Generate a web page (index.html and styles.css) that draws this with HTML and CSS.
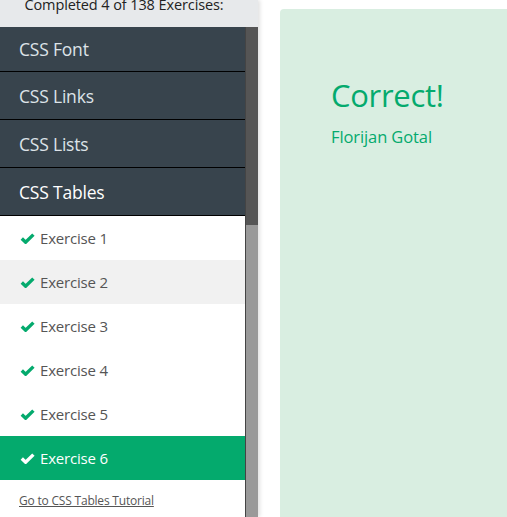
FILE: index.html
```html
<!DOCTYPE html>
<html>
<head>
<meta charset="utf-8">
<link rel="stylesheet" href="styles.css">
</head>
<body>
<div class="page">
  <aside class="sidebar">
    <div class="progress">Completed 4 of 138 Exercises:</div>
    <div class="scroller">
      <nav class="menu">
        <div class="cat cat-first">CSS Font</div>
        <div class="cat">CSS Links</div>
        <div class="cat">CSS Lists</div>
        <div class="cat cat-open">CSS Tables</div>
        <div class="ex"><svg class="chk" viewBox="0 0 15 11"><path d="M1.8 5.6 L5.6 9.2 L13.4 1.6"/></svg>Exercise 1</div>
        <div class="ex ex-hover"><svg class="chk" viewBox="0 0 15 11"><path d="M1.8 5.6 L5.6 9.2 L13.4 1.6"/></svg>Exercise 2</div>
        <div class="ex"><svg class="chk" viewBox="0 0 15 11"><path d="M1.8 5.6 L5.6 9.2 L13.4 1.6"/></svg>Exercise 3</div>
        <div class="ex"><svg class="chk" viewBox="0 0 15 11"><path d="M1.8 5.6 L5.6 9.2 L13.4 1.6"/></svg>Exercise 4</div>
        <div class="ex"><svg class="chk" viewBox="0 0 15 11"><path d="M1.8 5.6 L5.6 9.2 L13.4 1.6"/></svg>Exercise 5</div>
        <div class="ex ex-active"><svg class="chk" viewBox="0 0 15 11"><path d="M1.8 5.6 L5.6 9.2 L13.4 1.6"/></svg>Exercise 6</div>
        <div class="tut"><a href="#">Go to CSS Tables Tutorial</a></div>
      </nav>
      <div class="scrollbar"><div class="thumb"></div></div>
    </div>
  </aside>
  <main class="main">
    <section class="card">
      <h1 class="title">Correct!</h1>
      <p class="name">Florijan Gotal</p>
    </section>
  </main>
</div>
</body>
</html>
```
FILE: styles.css
```css
html, body {
  margin: 0;
  padding: 0;
  height: 100%;
  overflow: hidden;
  background: #ffffff;
  font-family: "Open Sans", "Noto Sans", sans-serif;
}
.page {
  display: flex;
  height: 517px;
}
.sidebar {
  width: 258px;
  flex: none;
  display: flex;
  flex-direction: column;
  box-shadow: 2px 0 4px rgba(0,0,0,0.12);
  position: relative;
  z-index: 1;
}
.progress {
  height: 27px;
  background: #e7e9eb;
  color: #222;
  font-size: 14.5px;
  text-align: center;
  line-height: 0;
  padding: 5px 10px 0 0;
  box-sizing: border-box;
  overflow: hidden;
  letter-spacing: -0.1px;
}
.scroller {
  flex: 1;
  display: flex;
  overflow: hidden;
}
.menu {
  width: 245px;
  flex: none;
  background: #fff;
  border-right: 1px solid #444;
}
.cat {
  height: 47px;
  border-bottom: 1px solid #000;
  background: #38444d;
  color: #dde3e8;
  font-size: 17.5px;
  padding-left: 19px;
  display: flex;
  align-items: center;
  letter-spacing: -0.2px;
}
.cat-first {
  height: 44px;
}
.cat-open {
  color: #ffffff;
}
.ex {
  height: 44px;
  display: flex;
  align-items: center;
  padding-left: 20px;
  color: #555;
  font-size: 15px;
  letter-spacing: -0.2px;
}
.ex-hover {
  background: #f1f1f1;
}
.ex-active {
  background: #04aa6d;
  color: #fff;
}
.chk {
  width: 15px;
  height: 11px;
  margin-right: 5px;
  fill: none;
  stroke: #04aa6d;
  stroke-width: 3.4;
  stroke-linejoin: miter;
  stroke-linecap: butt;
}
.ex-active .chk {
  stroke: #fff;
}
.tut {
  padding: 12px 19px 0;
  font-size: 12px;
  letter-spacing: -0.2px;
}
.tut a {
  color: #555;
}
.scrollbar {
  width: 12px;
  flex: none;
  background: #999;
}
.thumb {
  height: 198px;
  background: #555;
}
.main {
  flex: 1;
  padding: 9px 0 0 22px;
}
.card {
  background: #d9eee1;
  height: 100%;
  border-radius: 4px 0 0 0;
  padding: 68px 0 0 51px;
  box-sizing: border-box;
  color: #04aa6d;
}
.title {
  margin: 0;
  font-weight: normal;
  font-size: 31px;
  line-height: 1.2;
  letter-spacing: -0.3px;
}
.name {
  margin: 11px 0 0;
  font-size: 16.5px;
  letter-spacing: -0.1px;
}
```
